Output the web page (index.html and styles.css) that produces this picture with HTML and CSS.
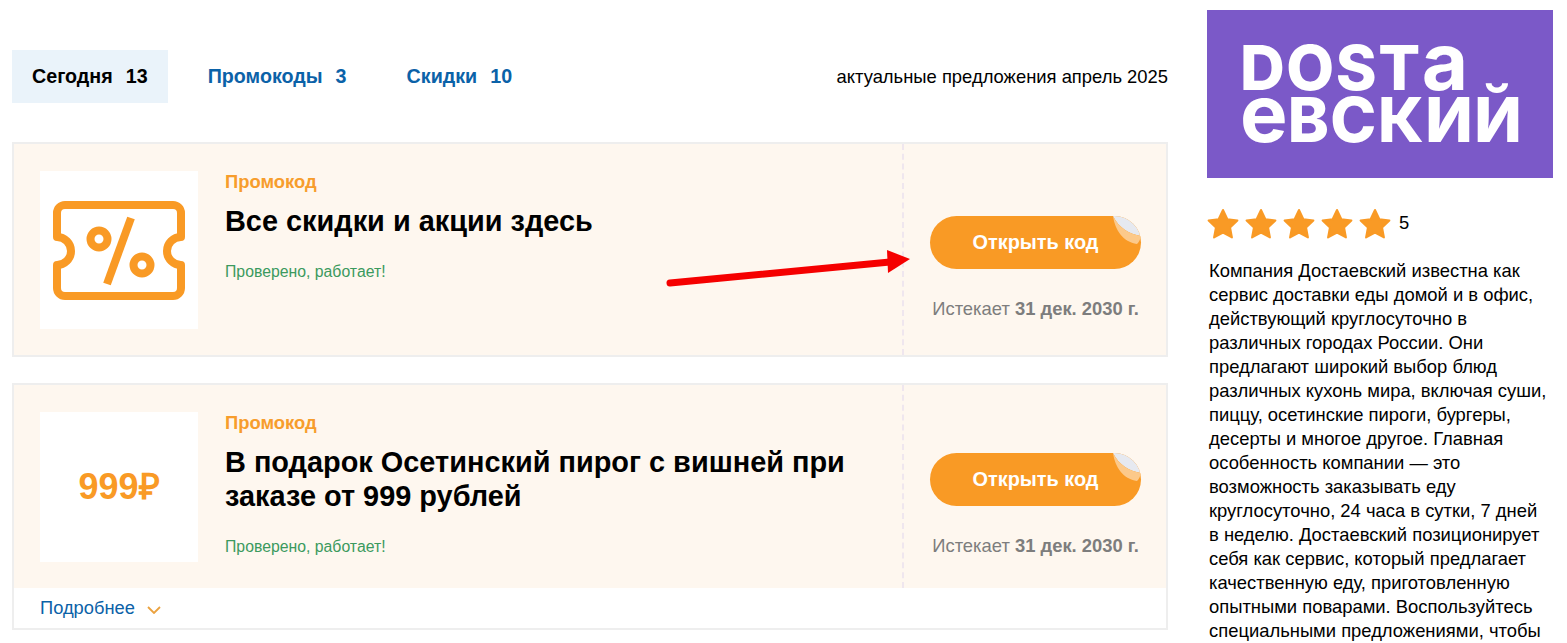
FILE: index.html
```html
<!DOCTYPE html>
<html lang="ru">
<head>
<meta charset="utf-8">
<title>Достаевский промокоды</title>
<link rel="stylesheet" href="styles.css">
</head>
<body>
<div class="page">
  <main class="main">
    <nav class="tabs">
      <a class="tab tab-active">Сегодня<span class="count">13</span></a>
      <a class="tab">Промокоды<span class="count">3</span></a>
      <a class="tab">Скидки<span class="count">10</span></a>
      <span class="tabs-note">актуальные предложения апрель 2025</span>
    </nav>

    <article class="card card-first">
      <div class="card-body">
        <div class="thumb">
          <svg class="ticket" viewBox="0 0 132 99" width="132" height="99" fill="none" stroke="#f99a25" stroke-width="8">
            <path d="M12 4H120a8 8 0 0 1 8 8V36A14 14 0 0 0 128 64V87a8 8 0 0 1-8 8H12a8 8 0 0 1-8-8V64A14 14 0 0 0 4 36V12a8 8 0 0 1 8-8Z" stroke-linejoin="round"/>
            <circle cx="46" cy="38" r="8.5"/>
            <circle cx="89" cy="64" r="8.5"/>
            <path d="M78 17 54 83"/>
          </svg>
        </div>
        <div class="info">
          <div class="kind">Промокод</div>
          <h2 class="title">Все скидки и акции здесь</h2>
          <div class="verified">Проверено, работает!</div>
        </div>
        <div class="action">
          <button class="open-btn">Открыть код
            <svg class="peel" viewBox="0 0 28 28" width="28" height="28"><path d="M0 0H14C20 3 26 10 28 20 16 18 6 12 0 0Z" fill="#e6e9f0"/><path d="M0 0C6 12 16 18 28 20 27 24 26 26 24 28 10 26 2 14 0 0Z" fill="#fcc98a"/></svg>
          </button>
          <div class="expires">Истекает <b>31 дек. 2030 г.</b></div>
        </div>
      </div>
      <svg class="arrow" viewBox="0 0 246 40" width="246" height="40"><path d="M5 35 225 14" stroke="#f50000" stroke-width="7" stroke-linecap="round"/><path d="M222 2 245 11 223 25Z" fill="#f50000"/></svg>
    </article>

    <article class="card card-second">
      <div class="card-body">
        <div class="thumb thumb-text">999₽</div>
        <div class="info">
          <div class="kind">Промокод</div>
          <h2 class="title">В подарок Осетинский пирог с вишней при заказе от 999 рублей</h2>
          <div class="verified">Проверено, работает!</div>
        </div>
        <div class="action">
          <button class="open-btn">Открыть код
            <svg class="peel" viewBox="0 0 28 28" width="28" height="28"><path d="M0 0H14C20 3 26 10 28 20 16 18 6 12 0 0Z" fill="#e6e9f0"/><path d="M0 0C6 12 16 18 28 20 27 24 26 26 24 28 10 26 2 14 0 0Z" fill="#fcc98a"/></svg>
          </button>
          <div class="expires">Истекает <b>31 дек. 2030 г.</b></div>
        </div>
      </div>
      <div class="card-foot">
        <a class="more">Подробнее</a>
        <svg class="chev" viewBox="0 0 14 8" width="14" height="8" fill="none" stroke="#eba23f" stroke-width="1.8"><path d="M1 1 7 7 13 1"/></svg>
      </div>
    </article>
  </main>

  <aside class="side">
    <div class="logo">
      <div class="logo-line">DOST<span class="logo-low">a</span></div>
      <div class="logo-line">
        <span class="logo-low">е</span>ВСКИЙ</div>
    </div>
    <div class="rating">
      <div class="stars">
        <svg class="star" viewBox="0 0 24 24" width="32" height="32"><path d="M12 1.5 15.3 8.4 22.8 9.4 17.3 14.6 18.7 22.1 12 18.5 5.3 22.1 6.7 14.6 1.2 9.4 8.7 8.4Z" fill="#f99a25" stroke="#f99a25" stroke-width="1.5" stroke-linejoin="round"/></svg>
        <svg class="star" viewBox="0 0 24 24" width="32" height="32"><path d="M12 1.5 15.3 8.4 22.8 9.4 17.3 14.6 18.7 22.1 12 18.5 5.3 22.1 6.7 14.6 1.2 9.4 8.7 8.4Z" fill="#f99a25" stroke="#f99a25" stroke-width="1.5" stroke-linejoin="round"/></svg>
        <svg class="star" viewBox="0 0 24 24" width="32" height="32"><path d="M12 1.5 15.3 8.4 22.8 9.4 17.3 14.6 18.7 22.1 12 18.5 5.3 22.1 6.7 14.6 1.2 9.4 8.7 8.4Z" fill="#f99a25" stroke="#f99a25" stroke-width="1.5" stroke-linejoin="round"/></svg>
        <svg class="star" viewBox="0 0 24 24" width="32" height="32"><path d="M12 1.5 15.3 8.4 22.8 9.4 17.3 14.6 18.7 22.1 12 18.5 5.3 22.1 6.7 14.6 1.2 9.4 8.7 8.4Z" fill="#f99a25" stroke="#f99a25" stroke-width="1.5" stroke-linejoin="round"/></svg>
        <svg class="star" viewBox="0 0 24 24" width="32" height="32"><path d="M12 1.5 15.3 8.4 22.8 9.4 17.3 14.6 18.7 22.1 12 18.5 5.3 22.1 6.7 14.6 1.2 9.4 8.7 8.4Z" fill="#f99a25" stroke="#f99a25" stroke-width="1.5" stroke-linejoin="round"/></svg>
      </div>
      <span class="score">5</span>
    </div>
    <p class="about">Компания Достаевский известна как<br>сервис доставки еды домой и в офис,<br>действующий круглосуточно в<br>различных городах России. Они<br>предлагают широкий выбор блюд<br>различных кухонь мира, включая суши,<br>пиццу, осетинские пироги, бургеры,<br>десерты и многое другое. Главная<br>особенность компании — это<br>возможность заказывать еду<br>круглосуточно, 24 часа в сутки, 7 дней<br>в неделю. Достаевский позиционирует<br>себя как сервис, который предлагает<br>качественную еду, приготовленную<br>опытными поварами. Воспользуйтесь<br>специальными предложениями, чтобы</p>
  </aside>
</div>
</body>
</html>
```
FILE: styles.css
```css
* { box-sizing: border-box; }
html, body { margin: 0; height: 643px; overflow: hidden; background: #fff; }
body { font-family: "Liberation Sans", Arial, sans-serif; color: #000; }

.page { display: flex; align-items: flex-start; padding: 10px 14px 0 12px; gap: 39px; }
.main { width: 1156px; flex: none; padding-top: 40px; }
.side { width: 346px; flex: none; }

.tabs { display: flex; align-items: center; height: 53px; margin-bottom: 39px; }
.tab { font-size: 19.7px; font-weight: 700; color: #0b62a8; padding: 0 60px 0 0; height: 53px; display: flex; align-items: center; }
.tab-active { background: #eaf3fa; color: #000; padding: 0 20px; margin-right: 40px; }
.count { margin-left: 13px; }
.tabs-note { margin-left: auto; font-size: 18.4px; }

.card { position: relative; border: 2px solid #eeeeee; }
.card-first { margin-bottom: 26px; }
.card-body { display: flex; background: #fef7ef; padding: 27px 0 0 26px; }
.card-first .card-body { height: 211px; }
.card-second .card-body { height: 203px; }

.thumb { width: 158px; height: 158px; flex: none; background: #fff; display: flex; align-items: center; justify-content: center; }
.card-second .thumb { height: 150px; padding-bottom: 4px; }
.thumb-text { font-size: 36px; font-weight: 700; color: #f99a25; }
.ticket { display: block; }

.info { flex: none; width: 704px; padding: 1px 30px 0 27px; }
.kind { font-size: 18.4px; font-weight: 700; color: #f79d2c; line-height: 20px; }
.title { font-size: 28.9px; font-weight: 700; line-height: 34px; margin: 12px 0 0; }
.verified { font-size: 15.8px; color: #3b9a5e; line-height: 18px; margin-top: 25px; }

.action { margin-top: -27px; flex: 1; border-left: 2px dashed #efe6ee; display: flex; flex-direction: column; align-items: center; padding-left: 1px; }
.card-first .action { padding-top: 72px; }
.card-second .action { padding-top: 68px; }
.open-btn { position: relative; width: 211px; height: 53px; border: 0; border-radius: 27px; background: #f99a25; color: #fff; font: 700 19.9px "Liberation Sans", Arial, sans-serif; padding: 0; overflow: hidden; }
.peel { position: absolute; top: 0; right: 0; }
.expires { font-size: 18.4px; color: #7d7d7d; margin-top: 30px; line-height: 20px; white-space: nowrap; }

.arrow { position: absolute; left: 651px; top: 104px; }

.card-foot { height: 40px; display: flex; align-items: center; background: #fff; padding-left: 26px; }
.more { font-size: 18.3px; color: #0b62a8; }
.chev { margin-left: 12px; margin-top: 3px; }

.logo { width: 346px; height: 168px; background: #7b59c8; color: #fff; padding: 32px 0 0 33px; font-family: Inter, "Liberation Sans", sans-serif; font-weight: 800; font-size: 62px; letter-spacing: 1.5px; }
.logo-line { line-height: 52px; height: 52px; white-space: nowrap; filter: blur(.7px); }
.logo-low { font-size: 80px; line-height: 0; font-weight: 700; letter-spacing: 0; }

.rating { display: flex; align-items: center; margin-top: 30px; height: 32px; }
.stars { display: flex; gap: 6px; }
.star { display: block; }
.score { font-size: 18.4px; margin-left: 8px; margin-top: -3px; }
.about { font-size: 18.4px; line-height: 24px; margin: 19px 0 0 2px; white-space: nowrap; }
```
